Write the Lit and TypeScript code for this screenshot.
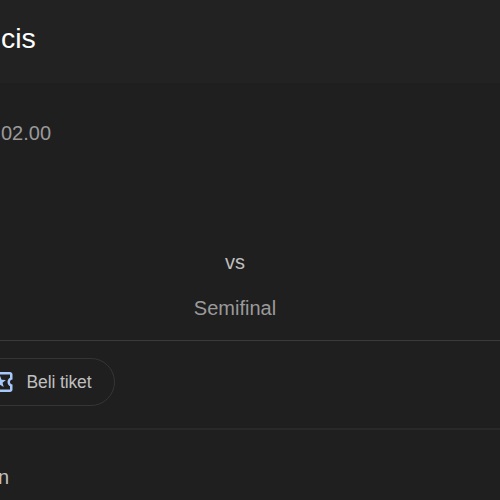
import { LitElement, html, css } from "lit";
import { customElement } from "lit/decorators.js";

@customElement("app-root")
export class AppRoot extends LitElement {
  static styles = css`
    :host {
      display: flex;
      flex-direction: column;
      width: 500px;
      height: 500px;
      overflow: hidden;
      background: #1f1f1f;
      color: #bfbfbf;
      font: 20px/24px "Liberation Sans", Arial, sans-serif;
      white-space: nowrap;
    }
    * { box-sizing: border-box; }
    .header {
      flex: none;
      height: 83px;
      padding: 22px 0 0 1px;
      background: #222222;
      color: #ffffff;
      font-size: 28.5px;
      line-height: 32px;
    }
    .match {
      flex: none;
      height: 258px;
      display: flex;
      flex-direction: column;
      border-bottom: 1px solid #3a3a3a;
    }
    .time { padding: 38px 0 0 1px; color: #9a9a9a; }
    .versus {
      width: 470px;
      margin-top: 105px;
      text-align: center;
    }
    .stage {
      width: 470px;
      margin-top: 22px;
      text-align: center;
      color: #9a9a9a;
    }
    .actions {
      flex: none;
      height: 89px;
      padding-top: 17px;
      border-bottom: 2px solid #292929;
    }
    .ticket {
      display: flex;
      align-items: center;
      width: 145px;
      height: 48px;
      margin-left: -30px;
      padding-left: 14px;
      gap: 11.5px;
      border: 1px solid #353535;
      border-radius: 24px;
      font-size: 17.5px;
      letter-spacing: -0.12px;
    }
    .icon {
      flex: none;
      width: 30px;
      height: 30px;
      fill: #a8c7fa;
    }
    .more { padding-top: 35px; margin-left: -2px; }
  `;

  render() {
    return html`
      <header class="header">cis</header>
      <section class="match">
        <div class="time">02.00</div>
        <div class="versus">vs</div>
        <div class="stage">Semifinal</div>
      </section>
      <section class="actions">
        <div class="ticket">
          <svg class="icon" viewBox="0 0 24 24" aria-hidden="true">
            <path d="M22 10V6c0-1.11-.9-2-2-2H4c-1.1 0-1.99.89-1.99 2v4c1.1 0 1.99.9 1.99 2s-.89 2-2 2v4c0 1.1.9 2 2 2h16c1.1 0 2-.9 2-2v-4c-1.1 0-2-.9-2-2s.9-2 2-2zm-2-1.46c-1.19.69-2 1.99-2 3.46s.81 2.77 2 3.46V18H4v-2.54c1.19-.69 2-1.99 2-3.46 0-1.48-.8-2.77-1.99-3.46L4 6h16v2.54zM9.07 16L12 14.12 14.93 16l-.89-3.36 2.69-2.2-3.47-.21L12 7l-1.27 3.22-3.47.21 2.69 2.21z"/>
          </svg>
          <span>Beli tiket</span>
        </div>
      </section>
      <div class="more">n</div>
    `;
  }
}
